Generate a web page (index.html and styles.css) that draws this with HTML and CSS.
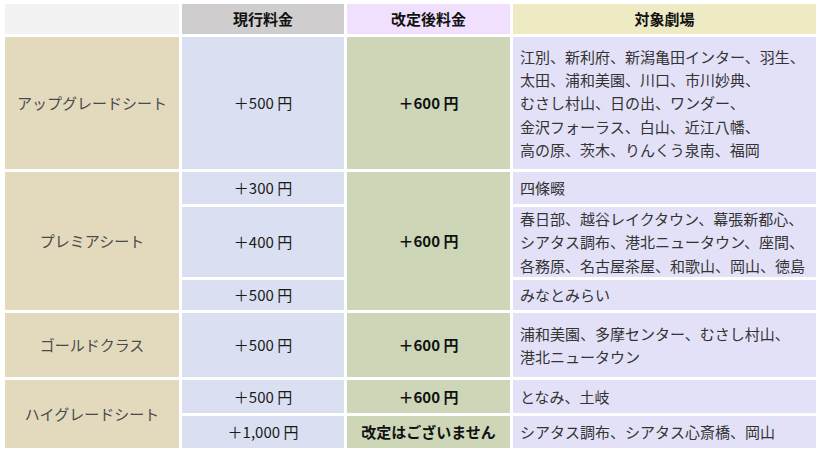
FILE: index.html
```html
<!DOCTYPE html>
<html lang="ja">
<head>
<meta charset="utf-8">
<link rel="stylesheet" href="styles.css">
</head>
<body>
<table class="fees">
  <colgroup>
    <col class="c-seat"><col class="c-cur"><col class="c-new"><col class="c-thr">
  </colgroup>
  <thead>
    <tr class="h-head">
      <th class="hd-blank"></th>
      <th class="hd-cur">現行料金</th>
      <th class="hd-new">改定後料金</th>
      <th class="hd-thr">対象劇場</th>
    </tr>
  </thead>
  <tbody>
    <tr class="h-132">
      <td class="seat">アップグレードシート</td>
      <td class="cur">＋500 円</td>
      <td class="new">＋600 円</td>
      <td class="thr">江別、新利府、新潟亀田インター、羽生、<br>太田、浦和美園、川口、市川妙典、<br>むさし村山、日の出、ワンダー、<br>金沢フォーラス、白山、近江八幡、<br>高の原、茨木、りんくう泉南、福岡</td>
    </tr>
    <tr class="h-32">
      <td class="seat" rowspan="3">プレミアシート</td>
      <td class="cur">＋300 円</td>
      <td class="new" rowspan="3">＋600 円</td>
      <td class="thr">四條畷</td>
    </tr>
    <tr class="h-70">
      <td class="cur">＋400 円</td>
      <td class="thr">春日部、越谷レイクタウン、幕張新都心、<br>シアタス調布、港北ニュータウン、座間、<br>各務原、名古屋茶屋、和歌山、岡山、徳島</td>
    </tr>
    <tr class="h-30">
      <td class="cur">＋500 円</td>
      <td class="thr">みなとみらい</td>
    </tr>
    <tr class="h-64">
      <td class="seat">ゴールドクラス</td>
      <td class="cur">＋500 円</td>
      <td class="new">＋600 円</td>
      <td class="thr">浦和美園、多摩センター、むさし村山、<br>港北ニュータウン</td>
    </tr>
    <tr class="h-33">
      <td class="seat" rowspan="2">ハイグレードシート</td>
      <td class="cur">＋500 円</td>
      <td class="new">＋600 円</td>
      <td class="thr">となみ、土岐</td>
    </tr>
    <tr class="h-32">
      <td class="cur">＋1,000 円</td>
      <td class="new">改定はございません</td>
      <td class="thr">シアタス調布、シアタス心斎橋、岡山</td>
    </tr>
  </tbody>
</table>
</body>
</html>
```

FILE: styles.css
```css
html, body {
  margin: 0;
  padding: 0;
  background: #ffffff;
}

body {
  font-family: "Noto Sans CJK JP", "Noto Sans", sans-serif;
  font-size: 15px;
  line-height: 23.3px;
  color: #333333;
}

.fees {
  table-layout: fixed;
  border-collapse: separate;
  border-spacing: 3px;
  margin: 1px 0 0 2px;
  width: 817px;
}

.c-seat { width: 174px; }
.c-cur  { width: 162px; }
.c-new  { width: 163px; }
.c-thr  { width: 303px; }

.fees th,
.fees td {
  padding: 0 7px;
  vertical-align: middle;
}

.h-head { height: 30px; }
.h-132 { height: 132px; }
.h-32 { height: 32px; }
.h-70 { height: 70px; }
.h-30 { height: 30px; }
.h-64 { height: 64px; }
.h-33 { height: 33px; }

.fees th {
  font-weight: bold;
  color: #111111;
  font-size: 15px;
  text-align: center;
}

.hd-blank { background: #f2f2f2; }
.hd-cur { background: #cfcdcd; }
.hd-new { background: #f0e0fe; }
.hd-thr { background: #eeeac4; font-size: 19px; }

.seat {
  background: #e3dabe;
  color: #4a4a4a;
  text-align: center;
}

.cur {
  background: #dae0f2;
  color: #1a1a1a;
  text-align: center;
}

.new {
  background: #ced6b8;
  color: #111111;
  font-weight: bold;
  text-align: center;
}

.thr {
  background: #e3e1f8;
  color: #333333;
  text-align: left;
  white-space: nowrap;
}
```
